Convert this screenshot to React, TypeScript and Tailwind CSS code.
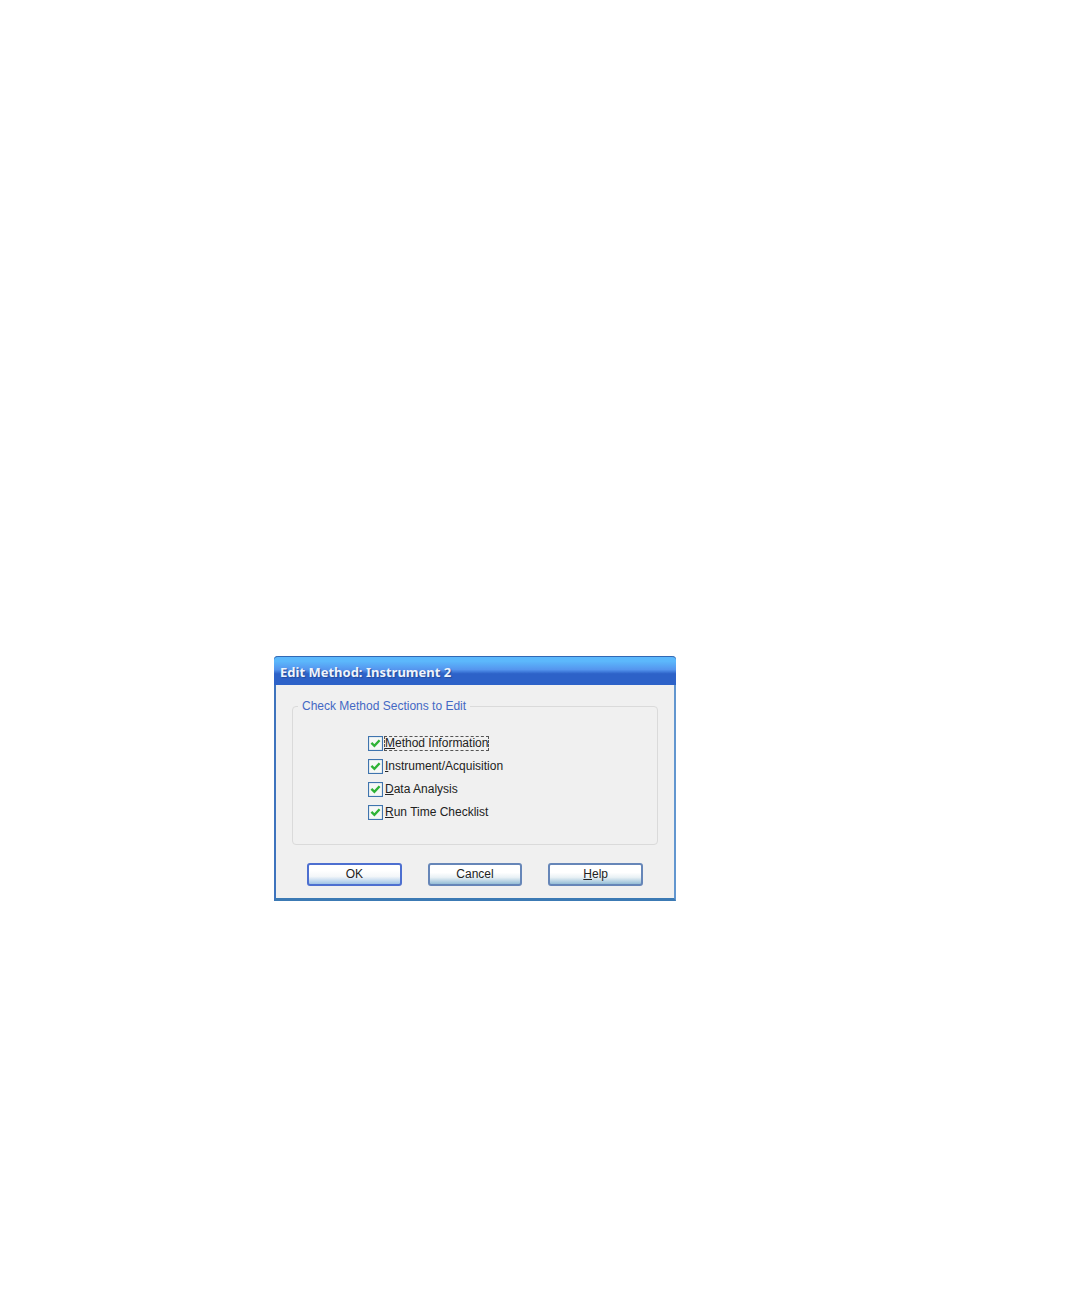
import { useState } from "react";

type Section = { id: string; accessKey: string; rest: string };

const sections: Section[] = [
  { id: "method-information", accessKey: "M", rest: "ethod Information" },
  { id: "instrument-acquisition", accessKey: "I", rest: "nstrument/Acquisition" },
  { id: "data-analysis", accessKey: "D", rest: "ata Analysis" },
  { id: "run-time-checklist", accessKey: "R", rest: "un Time Checklist" },
];

function SectionCheckbox({ section, focused }: { section: Section; focused: boolean }) {
  const [checked, setChecked] = useState(true);
  return (
    <div className="flex items-center gap-px">
      <span className="relative flex size-[15px] shrink-0">
        <input
          id={section.id}
          type="checkbox"
          checked={checked}
          onChange={(e) => setChecked(e.target.checked)}
          className="size-[15px] appearance-none border border-[#3f74ae] bg-[#f6f8f6] shadow-[inset_0_0_1px_#5585bb]"
        />
        {checked && (
          <svg viewBox="0 0 15 15" className="pointer-events-none absolute inset-0 size-[15px]" aria-hidden="true">
            <path d="M3.4 6.8 L6.4 9.8 L11.6 4.2" fill="none" stroke="#2fb336" strokeWidth="2.4" />
          </svg>
        )}
      </span>
      <label
        htmlFor={section.id}
        className={
          focused
            ? "border border-dashed border-[#555555] leading-[13px]"
            : "border border-transparent leading-[13px]"
        }
      >
        <span className="underline">{section.accessKey}</span>
        {section.rest}
      </label>
    </div>
  );
}

const buttonBase = "h-[23px] flex-1 rounded-[3px] text-center leading-[19px]";

export default function App() {
  return (
    <main className="min-h-screen bg-white pt-[656px] pl-[274px] font-['Liberation_Sans',Arial,sans-serif] text-[12px] text-[#222222]">
      <section
        role="dialog"
        aria-labelledby="dialog-title"
        className="w-full max-w-[402px] rounded-t-[4px] border-x-2 border-b-[3px] border-l-[#3e73bd] border-r-[#6296cf] border-b-[#3c7ab4] bg-[#f0f0f0]"
      >
        <header className="-mx-[2px] flex h-[29px] items-center rounded-t-[4px] border-t border-[#3268b4] bg-linear-to-b from-[#5cb8fc] from-15% via-[#5595ee] via-45% to-[#2d62c8] to-60% px-[6px] pt-px">
          <h1
            id="dialog-title"
            className="font-['Noto_Sans',sans-serif] text-[13px] leading-4 font-bold text-[#eef4fc] [text-shadow:1px_1px_1px_#244c9c]"
          >
            Edit Method: Instrument 2
          </h1>
        </header>

        <form className="px-4 pb-3" onSubmit={(e) => e.preventDefault()}>
          <fieldset className="mt-[13px] rounded-[4px] border border-[#dadada] px-[5px] pb-[24px]">
            <legend className="px-1 leading-4 text-[#4468c4]">Check Method Sections to Edit</legend>
            <div className="mt-[22px] ml-[70px] flex flex-col gap-2">
              {sections.map((section, index) => (
                <SectionCheckbox key={section.id} section={section} focused={index === 0} />
              ))}
            </div>
          </fieldset>

          <div className="mt-[18px] flex gap-[26px] px-[15px]">
            <button
              type="submit"
              className={`${buttonBase} border-2 border-[#4d6fd0] bg-linear-to-b from-white from-30% via-[#f4f7f9] via-60% to-[#9fc3e6]`}
            >
              OK
            </button>
            <button
              type="button"
              className={`${buttonBase} border-2 border-[#6686b8] bg-linear-to-b from-white from-40% via-[#e9f1f5] via-65% to-[#94bdd6]`}
            >
              Cancel
            </button>
            <button
              type="button"
              className={`${buttonBase} border-2 border-[#6686b8] bg-linear-to-b from-white from-40% via-[#e9f1f5] via-65% to-[#94bdd6]`}
            >
              <span className="underline">H</span>elp
            </button>
          </div>
        </form>
      </section>
    </main>
  );
}
